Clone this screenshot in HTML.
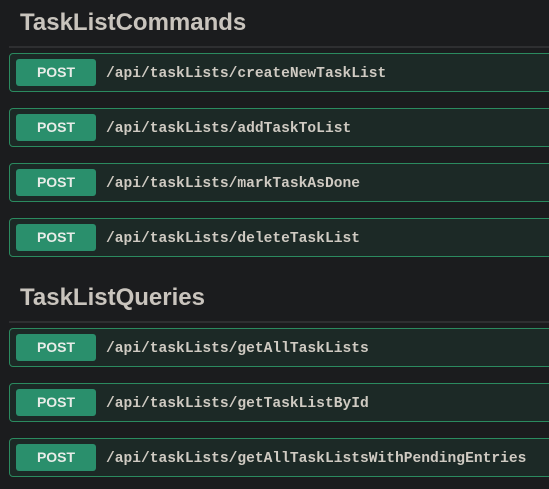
<!DOCTYPE html>
<html><head><meta charset="utf-8"><style>
html,body{margin:0;padding:0;background:#1b1c1e;width:549px;height:489px;overflow:hidden}
body{font-family:"Liberation Sans",sans-serif;position:relative}
h2{position:absolute;left:20px;margin:0;font-size:24px;font-weight:bold;color:#c9c4bd}
.line{position:absolute;left:9px;right:0;height:2px;background:#2e2f31}
.row{position:absolute;left:9px;width:560px;height:39px;background:#1c2926;border:1px solid #2b8a5f;border-radius:4px;box-sizing:border-box}
.btn{position:absolute;left:6px;top:5px;width:80px;height:27px;background:#2a8f6c;border-radius:3px;color:#e8ece8;font-weight:bold;font-size:14px;text-align:center;line-height:26px}
.p{position:absolute;left:96px;top:12px;font-family:"Liberation Mono",monospace;font-weight:bold;font-size:14.6px;color:#cfcac2;white-space:nowrap}
</style></head><body>
<h2 style="top:9px">TaskListCommands</h2>
<div class="line" style="top:46px"></div>
<div class="row" style="top:53px"><div class="btn">POST</div><div class="p">/api/taskLists/createNewTaskList</div></div>
<div class="row" style="top:108px"><div class="btn">POST</div><div class="p">/api/taskLists/addTaskToList</div></div>
<div class="row" style="top:163px"><div class="btn">POST</div><div class="p">/api/taskLists/markTaskAsDone</div></div>
<div class="row" style="top:218px"><div class="btn">POST</div><div class="p">/api/taskLists/deleteTaskList</div></div>
<h2 style="top:284px">TaskListQueries</h2>
<div class="line" style="top:321px"></div>
<div class="row" style="top:328px"><div class="btn">POST</div><div class="p">/api/taskLists/getAllTaskLists</div></div>
<div class="row" style="top:383px"><div class="btn">POST</div><div class="p">/api/taskLists/getTaskListById</div></div>
<div class="row" style="top:438px"><div class="btn">POST</div><div class="p">/api/taskLists/getAllTaskListsWithPendingEntries</div></div>
</body></html>
